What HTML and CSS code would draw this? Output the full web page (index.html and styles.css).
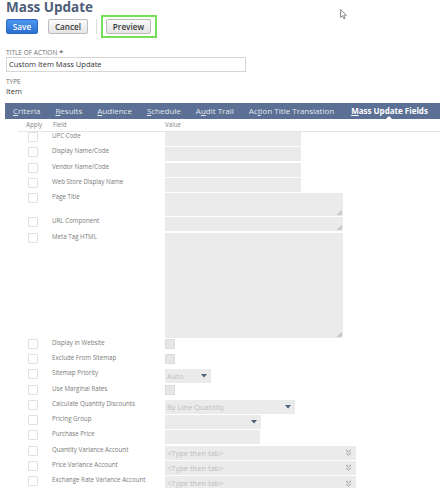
FILE: index.html
```html
<!DOCTYPE html>
<html lang="en">
<head>
<meta charset="utf-8">
<title>Mass Update</title>
<link rel="stylesheet" href="styles.css">
</head>
<body>
<div class="page">
  <h1 class="title">Mass Update</h1>
  <div class="actions">
    <button class="btn btn-save">Save</button>
    <button class="btn btn-cancel">Cancel</button>
    <span class="sep"></span>
    <span class="highlight"><button class="btn btn-preview">Preview</button></span>
  </div>

  <div class="field-label">Title of Action <span class="req">*</span></div>
  <div class="text-input">Custom Item Mass Update</div>
  <div class="field-label type-label">Type</div>
  <div class="static">Item</div>

  <nav class="tabs">
    <span class="tab"><u>C</u>riteria</span>
    <span class="tab"><u>R</u>esults</span>
    <span class="tab"><u>A</u>udience</span>
    <span class="tab"><u>S</u>chedule</span>
    <span class="tab">A<u>u</u>dit Trail</span>
    <span class="tab">Ac<u>t</u>ion Title Translation</span>
    <span class="tab tab-active"><u>M</u>ass Update Fields</span>
  </nav>

  <div class="table">
    <div class="head">
      <span class="h-apply">Apply</span>
      <span class="h-field">Field</span>
      <span class="h-value">Value</span>
    </div>

    <div class="row"><span class="cb"></span><span class="label">UPC Code</span><div class="inp inp-text"></div></div>
    <div class="row"><span class="cb"></span><span class="label">Display Name/Code</span><div class="inp inp-text"></div></div>
    <div class="row"><span class="cb"></span><span class="label">Vendor Name/Code</span><div class="inp inp-text"></div></div>
    <div class="row"><span class="cb"></span><span class="label">Web Store Display Name</span><div class="inp inp-text"></div></div>
    <div class="row"><span class="cb"></span><span class="label">Page Title</span>
      <div class="area area-2"><svg class="grip" width="5" height="5" viewBox="0 0 5 5"><path d="M0.5 5 L5 0.5 M2.8 5 L5 2.8" stroke="#8a8a8a" stroke-width="0.8" fill="none"/></svg></div></div>
    <div class="row"><span class="cb"></span><span class="label">URL Component</span>
      <div class="area area-1"><svg class="grip" width="5" height="5" viewBox="0 0 5 5"><path d="M0.5 5 L5 0.5 M2.8 5 L5 2.8" stroke="#8a8a8a" stroke-width="0.8" fill="none"/></svg></div></div>
    <div class="row"><span class="cb"></span><span class="label">Meta Tag HTML</span>
      <div class="area area-big"><svg class="grip" width="5" height="5" viewBox="0 0 5 5"><path d="M0.5 5 L5 0.5 M2.8 5 L5 2.8" stroke="#8a8a8a" stroke-width="0.8" fill="none"/></svg></div></div>
    <div class="row"><span class="cb"></span><span class="label">Display in Website</span><div class="val-cell"><span class="vcb"></span></div></div>
    <div class="row"><span class="cb"></span><span class="label">Exclude From Sitemap</span><div class="val-cell"><span class="vcb"></span></div></div>
    <div class="row"><span class="cb"></span><span class="label">Sitemap Priority</span>
      <div class="sel sel-auto"><span>Auto</span><svg class="arrow" width="6" height="4" viewBox="0 0 6 4"><polygon points="0,0 6,0 3,3.6" fill="#4d5f79"/></svg></div></div>
    <div class="row"><span class="cb"></span><span class="label">Use Marginal Rates</span><div class="val-cell"><span class="vcb"></span></div></div>
    <div class="row"><span class="cb"></span><span class="label">Calculate Quantity Discounts</span>
      <div class="sel sel-qty"><span>By Line Quantity</span><svg class="arrow" width="6" height="4" viewBox="0 0 6 4"><polygon points="0,0 6,0 3,3.6" fill="#4d5f79"/></svg></div></div>
    <div class="row"><span class="cb"></span><span class="label">Pricing Group</span>
      <div class="sel sel-group"><span></span><svg class="arrow" width="6" height="4" viewBox="0 0 6 4"><polygon points="0,0 6,0 3,3.6" fill="#4d5f79"/></svg></div></div>
    <div class="row"><span class="cb"></span><span class="label">Purchase Price</span><div class="inp inp-price"></div></div>
    <div class="row"><span class="cb"></span><span class="label">Quantity Variance Account</span>
      <div class="sel acct"><span>&lt;Type then tab&gt;</span><svg class="chev" width="7" height="7" viewBox="0 0 7 7"><path d="M1 0.8 L3.5 3 L6 0.8 M1 3.8 L3.5 6 L6 3.8" stroke="#9a9a9a" stroke-width="1" fill="none"/></svg></div></div>
    <div class="row"><span class="cb"></span><span class="label">Price Variance Account</span>
      <div class="sel acct"><span>&lt;Type then tab&gt;</span><svg class="chev" width="7" height="7" viewBox="0 0 7 7"><path d="M1 0.8 L3.5 3 L6 0.8 M1 3.8 L3.5 6 L6 3.8" stroke="#9a9a9a" stroke-width="1" fill="none"/></svg></div></div>
    <div class="row"><span class="cb"></span><span class="label">Exchange Rate Variance Account</span>
      <div class="sel acct"><span>&lt;Type then tab&gt;</span><svg class="chev" width="7" height="7" viewBox="0 0 7 7"><path d="M1 0.8 L3.5 3 L6 0.8 M1 3.8 L3.5 6 L6 3.8" stroke="#9a9a9a" stroke-width="1" fill="none"/></svg></div></div>
  </div>
</div>

<svg class="cursor" width="8" height="11" viewBox="0 0 8 11"><path d="M0.6 0.6 L0.6 8.4 L2.5 6.6 L3.9 9.8 L5.1 9.3 L3.8 6.2 L6.4 6.2 Z" fill="#fff" stroke="#7a7a7a" stroke-width="0.9" stroke-linejoin="round"/></svg>
</body>
</html>
```

FILE: styles.css
```css
* {
  box-sizing: border-box;
}

html,
body {
  margin: 0;
  padding: 0;
  background: #fff;
}

body {
  position: relative;
  width: 440px;
  height: 488px;
  overflow: hidden;
  font-family: "Open Sans", "Liberation Sans", sans-serif;
  color: #333;
}

.page {
  padding-left: 6px;
}

.title {
  margin: 0;
  font-size: 13.5px;
  line-height: 14px;
  font-weight: 700;
  color: #4d5d79;
}

/* action buttons */
.actions {
  display: flex;
  align-items: center;
  height: 23px;
  margin-top: 1px;
}

.btn {
  height: 15px;
  padding: 0;
  font-family: inherit;
  font-size: 8.2px;
  font-weight: 600;
  line-height: 13px;
  color: #3a3a3a;
  background: linear-gradient(#fbfbfb, #e4e4e4);
  border: 1px solid #bcbcbc;
  border-radius: 2px;
}

.btn-save {
  width: 32px;
  color: #fff;
  background: linear-gradient(#4c98ef, #2b6fd3);
  border-color: #2b66c0;
}

.btn-cancel {
  width: 40px;
  margin-left: 10px;
}

.btn-preview {
  width: 45px;
}

.sep {
  width: 1px;
  height: 15px;
  margin-left: 8px;
  background: #dedede;
}

.highlight {
  display: flex;
  margin-left: 4px;
  padding: 2px 4px 2px 3px;
  border: 2px solid #74df58;
}

/* header fields */
.field-label {
  margin-top: 10px;
  font-size: 6.5px;
  line-height: 8px;
  color: #707070;
  text-transform: uppercase;
}

.req {
  font-size: 8px;
  color: #444;
}

.text-input {
  width: 240px;
  height: 15px;
  padding-left: 2px;
  font-size: 7.5px;
  line-height: 13px;
  color: #333;
  border: 1px solid #d6d6d6;
}

.type-label {
  margin-top: 6px;
}

.static {
  font-size: 7.5px;
  line-height: 10px;
  color: #333;
}

/* tabs */
.tabs {
  display: flex;
  gap: 15px;
  height: 16px;
  margin-top: 7px;
  margin-left: -1px;
  padding-left: 8px;
  background: #5b7094;
}

.tab {
  position: relative;
  font-size: 8px;
  line-height: 16px;
  color: #e2e7ef;
  white-space: nowrap;
}

.tab u {
  text-decoration-thickness: 0.6px;
  text-underline-offset: 1px;
}

.tab-active {
  margin-left: 2px;
  font-weight: 700;
  color: #fff;
}

.tab-active::after {
  content: "";
  position: absolute;
  left: 50%;
  bottom: 0;
  transform: translateX(-50%);
  border-left: 3px solid transparent;
  border-right: 3px solid transparent;
  border-bottom: 3px solid #fff;
}

/* mass update table */
.table {
  margin-left: 12px;
}

.head,
.row {
  display: grid;
  grid-template-columns: 30px 117px 1fr;
}

.head {
  height: 13px;
  font-size: 6.2px;
  line-height: 12px;
  color: #858585;
  border-bottom: 1px solid #e5e5e5;
}

.h-apply {
  padding-left: 8px;
}

.h-field {
  padding-left: 5px;
}

.row {
  min-height: 14px;
  margin-bottom: 1.25px;
}

.cb {
  width: 10px;
  height: 10px;
  margin-left: 10px;
  background: #fff;
  border: 1px solid #e0e0e0;
  border-radius: 1px;
}

.label {
  padding-left: 4px;
  font-size: 6.2px;
  line-height: 8px;
  color: #7a7a7a;
  white-space: nowrap;
}

.inp {
  height: 14px;
  background: #ebebeb;
}

.inp-text {
  width: 136px;
}

.inp-price {
  width: 95px;
}

.area {
  position: relative;
  width: 178px;
  background: #ebebeb;
}

.area-2 {
  height: 23px;
}

.area-1 {
  height: 14px;
}

.area-big {
  height: 105px;
}

.grip {
  position: absolute;
  right: 1px;
  bottom: 1px;
}

.vcb {
  display: block;
  width: 10px;
  height: 10px;
  background: #e6e6e6;
  border: 1px solid #dcdcdc;
}

.sel {
  display: flex;
  align-items: center;
  justify-content: space-between;
  height: 14px;
  padding: 0 4px 0 2px;
  font-size: 7.5px;
  line-height: 14px;
  color: #bdbdbd;
  background: #ebebeb;
  white-space: nowrap;
}

.sel-auto {
  width: 46px;
}

.sel-qty {
  width: 130px;
}

.sel-group {
  width: 96px;
}

.acct {
  width: 191px;
}

.arrow,
.chev {
  flex: none;
}

.cursor {
  position: absolute;
  left: 340px;
  top: 9px;
}
```
